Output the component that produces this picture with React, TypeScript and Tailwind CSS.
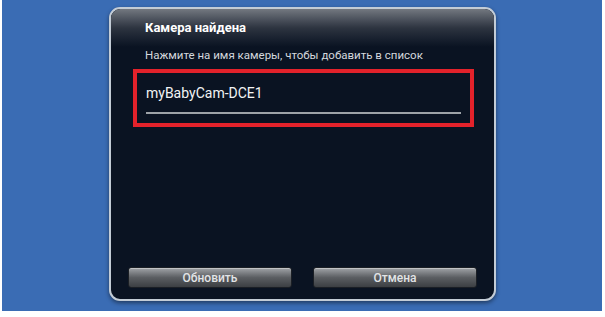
export default function App() {
  return (
    <div className="w-[605px] h-[317px] bg-white" style={{ fontFamily: "Roboto, 'Noto Sans', sans-serif" }}>
      <div className="ml-[2px] w-[600px] h-[311px] bg-[#3a6cb4] pt-[7px] pl-[107px]">
        <div className="relative w-[387px] h-[294px] rounded-[11px] border-2 border-[#c3ccd6] bg-[#0a1322] shadow-[0_2px_4px_rgba(0,0,0,0.45)] overflow-hidden flex flex-col">
          {/* glossy header shine */}
          <div className="absolute inset-x-0 top-0 h-[38px] bg-gradient-to-b from-[#737880] via-[#2d3440] to-[#0a1322] rounded-t-[9px]" />
          <div className="relative pl-[34px] pt-[10px] text-[13px] font-bold leading-[18px] text-white">
            Камера найдена
          </div>
          <div className="relative pl-[34px] mt-[10px] text-[11.5px] leading-[16px] text-[#d4d8dd]">
            Нажмите на имя камеры, чтобы добавить в список
          </div>
          <div className="mt-[6px] ml-[22px] w-[341px] h-[58px] border-[4px] border-[#e3222b] flex flex-col px-[9px]">
            <div className="pt-[12px] text-[14px] font-normal leading-[17px] text-[#f2f3f5]">myBabyCam-DCE1</div>
            <div className="mt-[10px] h-[2px] bg-[#9ea3a8]" />
          </div>
          <div className="mt-auto mb-[11px] flex justify-between px-[17px]">
            {["Обновить", "Отмена"].map((label) => (
              <button
                key={label}
                className="w-[164px] h-[21px] rounded-[3px] border border-[#1b1f25] bg-gradient-to-b from-[#a2a5a9] via-[#5b5e62] to-[#3c3f43] text-[12px] font-medium leading-none text-[#e2e4e6] shadow-[inset_0_1px_0_rgba(255,255,255,0.35)]"
              >
                {label}
              </button>
            ))}
          </div>
        </div>
      </div>
    </div>
  )
}
